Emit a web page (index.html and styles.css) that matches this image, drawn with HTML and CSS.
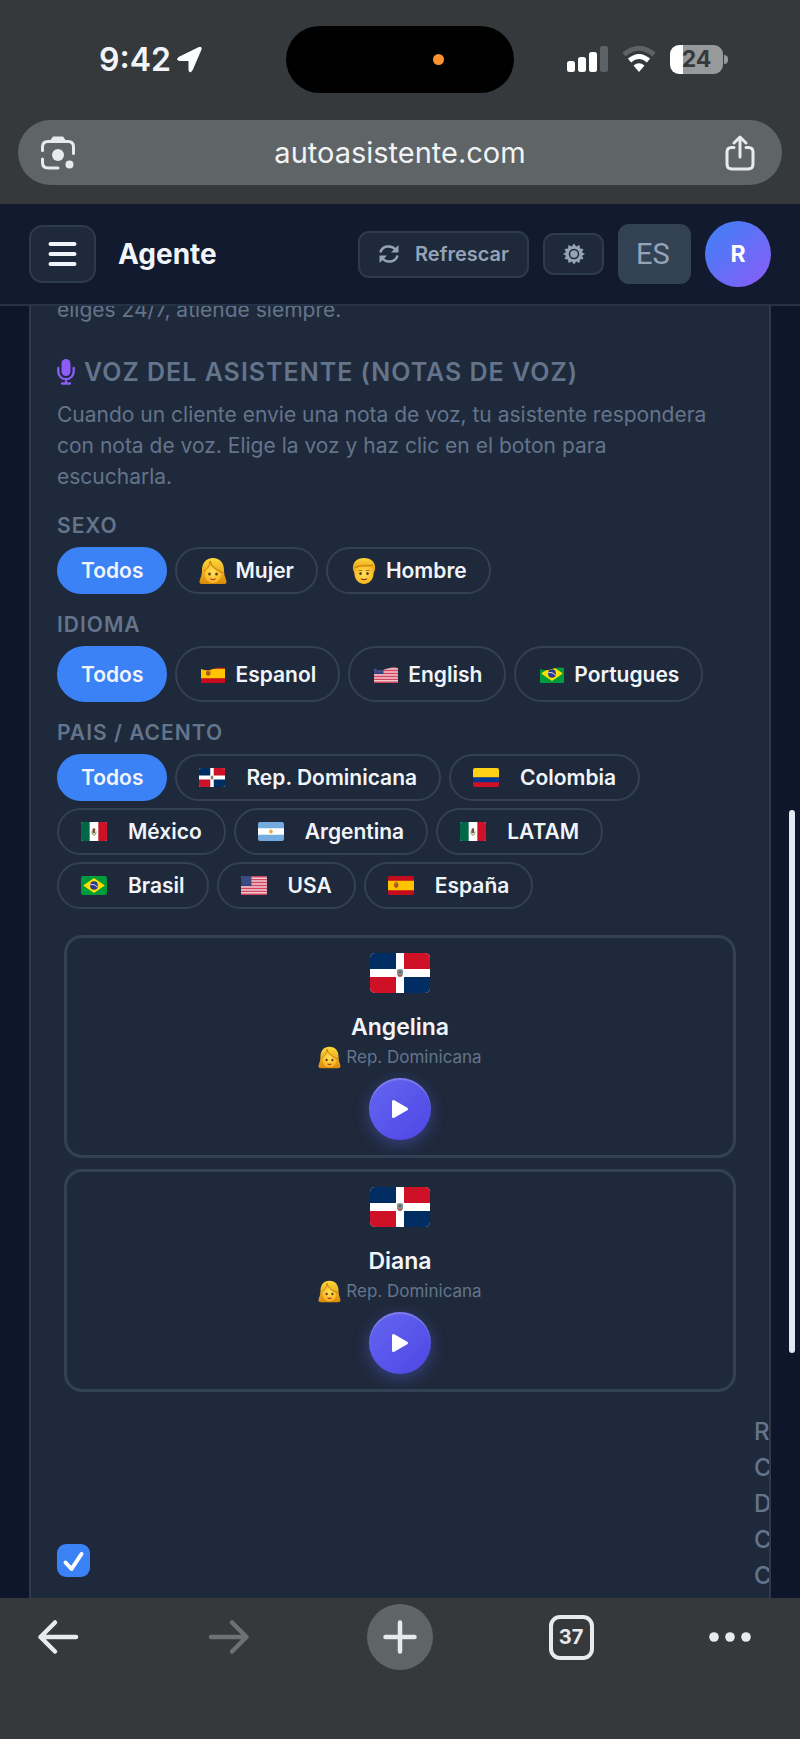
FILE: index.html
```html
<!DOCTYPE html>
<html lang="es">
<head>
  <meta charset="UTF-8">
  <meta name="viewport" content="width=device-width, initial-scale=1.0">
  <title>Agente</title>
  <link rel="stylesheet" href="styles.css">
</head>
<body>
  <!-- Shared icons -->
  <svg class="sprite" width="0" height="0" aria-hidden="true">
    <defs>
      <linearGradient id="hair" x1="0" y1="0" x2="0" y2="1">
        <stop offset="0" stop-color="#ffd83a"/>
        <stop offset="1" stop-color="#d98a0b"/>
      </linearGradient>
      <radialGradient id="skin" cx=".5" cy=".4" r=".6">
        <stop offset="0" stop-color="#ffe25a"/>
        <stop offset="1" stop-color="#fbb41c"/>
      </radialGradient>
      <symbol id="woman" viewBox="0 0 28 28">
        <path d="M14 1C7 1 3 6 3 13c0 6-2 8-2.500 12q0 2 3 2h21q3 0 3-2C27 21 25 19 25 13 25 6 21 1 14 1z" fill="url(#hair)"/>
        <path d="M12 7c-3 3-6 4-6.500 9C5.500 22 9.500 26 14 26s8.500-4 8.500-9.500C20 14 15 12 12 7z" fill="url(#skin)"/>
        <path d="M11 4c1 6 7 9 13 12" fill="none" stroke="#c97a08" stroke-width="1.200"/>
        <path d="M11 4c0 5-3 8-6 10" fill="none" stroke="#c97a08" stroke-width="1"/>
        <ellipse cx="10.500" cy="17" rx="1.300" ry="1.600" fill="#5b3a12"/>
        <ellipse cx="17.500" cy="17" rx="1.300" ry="1.600" fill="#5b3a12"/>
        <path d="M12 22q2 1.300 4 0" fill="#c4303a" stroke="#c4303a" stroke-width="1.400" stroke-linecap="round"/>
      </symbol>
      <symbol id="man" viewBox="0 0 28 28">
        <path d="M3 13C2 5 7 1 14 1s12 4 11 12l-2 4H5z" fill="url(#hair)"/>
        <path d="M4.500 11c3-2 16-2 19 0v6c0 6-5 10-9.500 10S4.500 23 4.500 17z" fill="url(#skin)"/>
        <path d="M5 11c4-4 13-1 18-3" fill="none" stroke="#c97a08" stroke-width="1.200"/>
        <path d="M9 13.500h3M16 13.500h3" stroke="#b5730d" stroke-width="1.200" stroke-linecap="round"/>
        <ellipse cx="10.500" cy="16.500" rx="1.300" ry="1.600" fill="#5b3a12"/>
        <ellipse cx="17.500" cy="16.500" rx="1.300" ry="1.600" fill="#5b3a12"/>
        <path d="M11.500 22q2.500 1.300 5 0" fill="none" stroke="#8b3a12" stroke-width="1.400" stroke-linecap="round"/>
      </symbol>
      <symbol id="do" viewBox="0 0 60 40" preserveAspectRatio="none">
        <path fill="#fff" d="M0 0h60v40H0z"/>
        <path fill="#002d62" d="M0 0h26v16H0zM34 24h26v16H34z"/>
        <path fill="#ce1126" d="M34 0h26v16H34zM0 24h26v16H0z"/>
        <path fill="#8a8f86" d="M27 17q3-2 6 0v5l-3 2-3-2z"/>
        <path fill="#b04a4a" d="M28 22h4v1.500h-4z"/>
        <path fill="#35618a" d="M29 18h2v2h-2z"/>
      </symbol>
      <symbol id="co" viewBox="0 0 60 40" preserveAspectRatio="none">
        <path fill="#fcd116" d="M0 0h60v20H0z"/>
        <path fill="#003893" d="M0 20h60v10H0z"/>
        <path fill="#ce1126" d="M0 30h60v10H0z"/>
      </symbol>
      <symbol id="mx" viewBox="0 0 60 40" preserveAspectRatio="none">
        <path fill="#fff" d="M0 0h60v40H0z"/>
        <path fill="#006847" d="M0 0h20v40H0z"/>
        <path fill="#ce1126" d="M40 0h20v40H40z"/>
        <path fill="none" stroke="#7b8a4a" stroke-width="2" d="M25 20q1 8 5 8t5-8"/>
        <path fill="#7a5230" d="M27 15q4-5 6 1l-1 7-4 1-2-4z"/>
      </symbol>
      <symbol id="ar" viewBox="0 0 60 40" preserveAspectRatio="none">
        <path fill="#74acdf" d="M0 0h60v40H0z"/>
        <path fill="#fff" d="M0 13h60v14H0z"/>
        <circle cx="30" cy="20" r="4" fill="#e8a838"/>
      </symbol>
      <symbol id="br" viewBox="0 0 60 40" preserveAspectRatio="none">
        <path fill="#009b3a" d="M0 0h60v40H0z"/>
        <path fill="#fedf00" d="M30 4l25 16-25 16L5 20z"/>
        <circle cx="30" cy="20" r="9" fill="#2b3a8c"/>
        <path fill="none" stroke="#dfe6f5" stroke-width="2" d="M21.500 18q9-2 16.500 5"/>
      </symbol>
      <symbol id="us" viewBox="0 0 60 40" preserveAspectRatio="none">
        <path fill="#f3c9d2" d="M0 0h60v40H0z"/>
        <path stroke="#d0465f" stroke-width="3" d="M0 1.500h60M0 7.700h60M0 13.800h60M0 20h60M0 26.200h60M0 32.300h60M0 38.500h60"/>
        <path fill="#34457c" d="M0 0h24v21H0z"/>
        <path stroke="#7684b3" stroke-width="1.500" stroke-dasharray="1.500 3" d="M3 4h20M5 8h18M3 12h20M5 16h18"/>
      </symbol>
      <symbol id="es" viewBox="0 0 60 40" preserveAspectRatio="none">
        <path fill="#c60b1e" d="M0 0h60v40H0z"/>
        <path fill="#ffc400" d="M0 10h60v20H0z"/>
        <path fill="#ad5a1e" d="M14 15h10v7q-5 6-10 0z"/>
        <path fill="#ad5a1e" d="M16 12h6v2h-6z"/>
      </symbol>
      <clipPath id="wave">
        <path d="M1 5q6 2.500 12 0t12-1v16q-6-1.500-12 .500T1 21z"/>
      </clipPath>
    </defs>
  </svg>

  <div class="status">
    <div class="status-time">
      <span>9:42</span>
      <svg width="27" height="27" viewBox="0 0 27 27"><path d="M2.500 11.500 23 1.500q3-1 2 2L16 24.500q-2.500 3-3-.500V14.500H3.500q-3.500-.500-1-3z" fill="#fff" stroke="#fff"/></svg>
    </div>
    <div class="island"><span class="rec-dot"></span></div>
    <div class="status-icons">
      <svg width="41" height="28" viewBox="0 0 41 28">
        <rect x="0" y="16" width="8" height="11" rx="2.500" fill="#fff"/>
        <rect x="11" y="12" width="8" height="15" rx="2.500" fill="#fff"/>
        <rect x="22" y="7" width="8" height="20" rx="2.500" fill="#fff"/>
        <rect x="33" y="1" width="8" height="26" rx="2.500" fill="#5f6264"/>
      </svg>
      <svg width="36" height="28" viewBox="0 0 36 28">
        <path d="M3 9.500Q18-3 33 9.500" fill="none" stroke="#5f6264" stroke-width="5"/>
        <path d="M8.500 15.500Q18 7.500 27.500 15.500" fill="none" stroke="#fff" stroke-width="5"/>
        <path d="M12.500 20.500q5.500-4.500 11 0L18 27z" fill="#fff"/>
      </svg>
      <div class="battery"><span>24</span></div>
    </div>
  </div>

  <form class="url-bar">
    <svg width="36" height="36" viewBox="0 0 36 36" fill="none" stroke="#e8eaed" stroke-width="3" stroke-linecap="round">
      <path d="M2.500 15.500V12q0-5.500 5.500-5.500h20q5.500 0 5.500 5.500v6.500"/>
      <path d="M2.500 24v3.500Q2.500 33 8 33h10"/>
      <path d="M11 6l2.500-3.500h9L25 6z" fill="#e8eaed" stroke-width="2"/>
      <circle cx="18" cy="20" r="6" fill="#e8eaed" stroke="none"/>
      <circle cx="29.500" cy="29.500" r="4" fill="#e8eaed" stroke="none"/>
    </svg>
    <input type="text" value="autoasistente.com" aria-label="Dirección">
    <button type="button" class="icon-btn" aria-label="Compartir">
      <svg width="32" height="36" viewBox="0 0 32 36" fill="none" stroke="#e8eaed" stroke-width="3" stroke-linecap="round" stroke-linejoin="round">
        <path d="M10 12.500H7.500Q3 12.500 3 17v12q0 5 5 5h16q5 0 5-5V17q0-4.500-4.500-4.500H22"/>
        <path d="M16 22V2.500M10 8l6-6 6 6"/>
      </svg>
    </button>
  </form>

  <header class="topbar">
    <button type="button" class="menu-btn" aria-label="Menú">
      <svg width="30" height="28" viewBox="0 0 30 28" stroke="#f1f5f9" stroke-width="4" stroke-linecap="round"><path d="M2.500 4h24M2.500 14h24M2.500 24h24"/></svg>
    </button>
    <h1>Agente</h1>
    <button type="button" class="refresh-btn">
      <svg width="22" height="20" viewBox="0 0 22 20" fill="none" stroke="#94a3b8" stroke-width="2.500">
        <path d="M2.500 8.500C4 2 13 0 18 6M19.500 11.500C18 18 9 20 4 14"/>
        <path d="M20.500 1v7.500H13zM1.500 19v-7.500H9z" fill="#94a3b8" stroke="none"/>
      </svg>
      Refrescar
    </button>
    <button type="button" class="theme-btn" aria-label="Cambiar tema">
      <svg width="22" height="22" viewBox="0 0 22 22">
        <path d="M11 .500l2.200 3L16.500 2l.500 3.500 3.500.500-1.500 3.300 3 1.700-3 1.700L20.500 16l-3.500.500-.500 3.500-3.300-1.500-2.200 3-2.200-3L5.500 20 5 16.500 1.500 16 3 12.700 0 11l3-1.700L1.500 6 5 5.500 5.500 2l3.300 1.500z" fill="#94a3b8"/>
        <circle cx="11" cy="11" r="4.500" fill="#94a3b8" stroke="#1e293b" stroke-width="1.500"/>
      </svg>
    </button>
    <select class="lang" aria-label="Idioma de la interfaz">
      <option>ES</option>
    </select>
    <div class="avatar">R</div>
  </header>

  <main>
    <section class="panel">
      <p class="hint">eliges 24/7, atiende siempre.</p>

      <h2>
        <svg width="18" height="26" viewBox="0 0 18 26">
          <rect x="4.500" y="0" width="9" height="17" rx="4.500" fill="#8b5cf6"/>
          <path d="M1.300 9v3.500a7.700 7.700 0 0 0 15.400 0V9M9 20v4M5 24.500h8" fill="none" stroke="#8b5cf6" stroke-width="2.300" stroke-linecap="round"/>
        </svg>
        VOZ DEL ASISTENTE (NOTAS DE VOZ)
      </h2>
      <p class="hint">Cuando un cliente envie una nota de voz, tu asistente respondera con nota de voz. Elige la voz y haz clic en el boton para escucharla.</p>

      <h3>SEXO</h3>
      <div class="pills">
        <button type="button" class="pill active">Todos</button>
        <button type="button" class="pill"><svg class="emoji"><use href="#woman"/></svg>Mujer</button>
        <button type="button" class="pill"><svg class="emoji"><use href="#man"/></svg>Hombre</button>
      </div>

      <h3>IDIOMA</h3>
      <div class="pills tall">
        <button type="button" class="pill active">Todos</button>
        <button type="button" class="pill"><svg class="emoji" viewBox="-1 -1 28 28"><use href="#es" y="3" width="26" height="19" clip-path="url(#wave)"/></svg>Espanol</button>
        <button type="button" class="pill"><svg class="emoji" viewBox="-1 -1 28 28"><use href="#us" y="3" width="26" height="19" clip-path="url(#wave)"/></svg>English</button>
        <button type="button" class="pill"><svg class="emoji" viewBox="-1 -1 28 28"><use href="#br" y="3" width="26" height="19" clip-path="url(#wave)"/></svg>Portugues</button>
      </div>

      <h3>PAIS / ACENTO</h3>
      <div class="pills countries">
        <button type="button" class="pill active">Todos</button>
        <button type="button" class="pill"><svg class="flag"><use href="#do"/></svg>Rep. Dominicana</button>
        <button type="button" class="pill"><svg class="flag"><use href="#co"/></svg>Colombia</button>
        <button type="button" class="pill"><svg class="flag"><use href="#mx"/></svg>México</button>
        <button type="button" class="pill"><svg class="flag"><use href="#ar"/></svg>Argentina</button>
        <button type="button" class="pill"><svg class="flag"><use href="#mx"/></svg>LATAM</button>
        <button type="button" class="pill"><svg class="flag"><use href="#br"/></svg>Brasil</button>
        <button type="button" class="pill"><svg class="flag"><use href="#us"/></svg>USA</button>
        <button type="button" class="pill"><svg class="flag"><use href="#es"/></svg>España</button>
      </div>

      <div class="voices">
        <article class="voice">
          <svg class="voice-flag"><use href="#do"/></svg>
          <h4>Angelina</h4>
          <p><svg class="emoji-sm"><use href="#woman"/></svg>Rep. Dominicana</p>
          <button type="button" class="play" aria-label="Escuchar a Angelina">
            <svg width="18" height="20" viewBox="0 0 18 20"><path d="M2.500 2.500v15L15.500 10z" fill="#fff" stroke="#fff" stroke-width="3" stroke-linejoin="round"/></svg>
          </button>
        </article>
        <article class="voice">
          <svg class="voice-flag"><use href="#do"/></svg>
          <h4>Diana</h4>
          <p><svg class="emoji-sm"><use href="#woman"/></svg>Rep. Dominicana</p>
          <button type="button" class="play" aria-label="Escuchar a Diana">
            <svg width="18" height="20" viewBox="0 0 18 20"><path d="M2.500 2.500v15L15.500 10z" fill="#fff" stroke="#fff" stroke-width="3" stroke-linejoin="round"/></svg>
          </button>
        </article>
      </div>

      <div class="option">
        <input type="checkbox" id="option" checked>
        <label for="option">R C D C C</label>
      </div>
    </section>
    <div class="scrollbar"></div>
  </main>

  <nav class="toolbar">
    <button type="button" aria-label="Atrás">
      <svg width="42" height="36" viewBox="0 0 42 36" fill="none" stroke="#e8eaed" stroke-width="4.500" stroke-linecap="round" stroke-linejoin="round"><path d="M39 18H3.500M18 3.500 3.500 18 18 32.500"/></svg>
    </button>
    <button type="button" aria-label="Adelante">
      <svg width="42" height="36" viewBox="0 0 42 36" fill="none" stroke="#6d7173" stroke-width="4.500" stroke-linecap="round" stroke-linejoin="round"><path d="M3 18h35.500M24 3.500 38.500 18 24 32.500"/></svg>
    </button>
    <button type="button" class="new-tab" aria-label="Nueva pestaña">
      <svg width="34" height="34" viewBox="0 0 34 34" stroke="#e8eaed" stroke-width="4.500" stroke-linecap="round"><path d="M17 2.500v29M2.500 17h29"/></svg>
    </button>
    <button type="button" aria-label="Pestañas abiertas"><span class="tab-count">37</span></button>
    <button type="button" class="more" aria-label="Más">
      <svg width="42" height="10" viewBox="0 0 42 10" fill="#e8eaed"><circle cx="5" cy="5" r="4.800"/><circle cx="21" cy="5" r="4.800"/><circle cx="37" cy="5" r="4.800"/></svg>
    </button>
  </nav>
</body>
</html>
```

FILE: styles.css
```css
* {
  box-sizing: border-box;
}
body {
  margin: 0;
  height: 100vh;
  display: flex;
  flex-direction: column;
  background: #35393b;
  color: #f1f5f9;
  font-family: Inter, "Liberation Sans", sans-serif;
}
button {
  font-family: inherit;
  cursor: pointer;
}
h1, h2, h3, h4, p {
  margin: 0;
}
svg {
  flex-shrink: 0;
}
.sprite {
  position: absolute;
}

/* Phone status bar */
.status {
  height: 118px;
  flex-shrink: 0;
  display: grid;
  grid-template-columns: 1fr 228px 1fr;
  align-items: center;
}
.status-time {
  display: flex;
  align-items: center;
  gap: 5px;
  padding-left: 99px;
  font-size: 32px;
  font-weight: 600;
}
.island {
  height: 67px;
  border-radius: 34px;
  background: #000;
  display: flex;
  align-items: center;
  justify-content: flex-end;
  padding-right: 70px;
}
.rec-dot {
  width: 11px;
  height: 11px;
  border-radius: 50%;
  background: #ff9230;
}
.status-icons {
  display: flex;
  align-items: center;
  gap: 13px;
  padding-left: 53px;
}
.battery {
  position: relative;
  width: 53px;
  height: 29px;
  border-radius: 9px;
  background: linear-gradient(90deg, #fff 13px, #97999a 13px);
  color: #35393b;
  font-size: 23px;
  font-weight: 700;
  line-height: 29px;
  text-align: center;
}
.battery::after {
  content: "";
  position: absolute;
  right: -5px;
  top: 10px;
  width: 4px;
  height: 9px;
  border-radius: 0 4px 4px 0;
  background: #97999a;
}

.url-bar {
  height: 65px;
  flex-shrink: 0;
  margin: 2px 18px 19px;
  padding: 0 26px 0 22px;
  border-radius: 33px;
  background: #5f6467;
  display: flex;
  align-items: center;
}
.url-bar input {
  flex: 1;
  min-width: 0;
  border: 0;
  background: none;
  color: #f1f3f4;
  font-family: inherit;
  font-size: 29px;
  text-align: center;
}
.icon-btn {
  display: flex;
  padding: 0;
  border: 0;
  background: none;
}

/* App header */
.topbar {
  height: 102px;
  flex-shrink: 0;
  display: flex;
  align-items: center;
  gap: 14px;
  padding: 0 29px;
  background: #111a2e;
  border-bottom: 2px solid #263246;
}
.menu-btn, .refresh-btn, .theme-btn {
  display: flex;
  align-items: center;
  justify-content: center;
  padding: 0;
  border: 2px solid #2d3b4f;
  background: #1e293b;
}
.menu-btn {
  width: 67px;
  height: 58px;
  border-radius: 14px;
}
h1 {
  margin: 0 auto 0 8px;
  font-size: 28px;
  font-weight: 700;
}
.refresh-btn {
  height: 47px;
  gap: 15px;
  padding: 0 18px;
  border-radius: 11px;
  color: #94a3b8;
  font-size: 20px;
  font-weight: 600;
}
.theme-btn {
  width: 61px;
  height: 42px;
  border-radius: 11px;
}
.lang {
  appearance: none;
  width: 73px;
  height: 60px;
  padding: 0 18px;
  border: 0;
  border-radius: 11px;
  background: #334155;
  color: #94a3b8;
  font-family: Roboto, sans-serif;
  font-size: 29px;
}
.avatar {
  width: 66px;
  height: 66px;
  border-radius: 50%;
  background: linear-gradient(135deg, #3b82f6, #8b5cf6);
  color: #fff;
  font-size: 23px;
  font-weight: 700;
  line-height: 66px;
  text-align: center;
}

main {
  position: relative;
  flex: 1;
  min-height: 0;
  overflow: hidden;
  background: #0d162a;
}
.panel {
  min-height: 110%;
  margin: -12px 29px 0;
  padding: 0 26px;
  background: #1e293b;
  border: solid #2d3a4e;
  border-width: 0 2px;
}
.hint {
  padding-right: 20px;
  color: #64748b;
  font-size: 21px;
  line-height: 31px;
}
h2 {
  display: flex;
  align-items: center;
  gap: 9px;
  margin: 29px 0 9px;
  color: #64748b;
  font-size: 25px;
  font-weight: 600;
  line-height: 36px;
  letter-spacing: 1px;
}
h3 {
  margin: 15px 0 6px;
  color: #64748b;
  font-size: 21px;
  font-weight: 600;
  line-height: 31px;
  letter-spacing: 1px;
}
.hint + h3 {
  margin-top: 18px;
}

/* Filters */
.pills {
  display: flex;
  flex-wrap: wrap;
  gap: 7px 8px;
}
.pill {
  display: flex;
  align-items: center;
  gap: 8px;
  height: 47px;
  padding: 0 22px;
  border: 2px solid #334155;
  border-radius: 28px;
  background: #1e293b;
  color: #f1f5f9;
  font-size: 21px;
  font-weight: 600;
}
.pill.active {
  background: #3b82f6;
  border-color: #3b82f6;
}
.tall .pill {
  height: 56px;
}
.countries .pill {
  gap: 21px;
}
.emoji {
  width: 28px;
  height: 28px;
}
.flag {
  width: 26px;
  height: 19px;
  border-radius: 2px;
}

/* Voice cards */
.voices {
  display: grid;
  gap: 11px;
  margin-top: 26px;
  padding: 0 7px;
}
.voice {
  display: flex;
  flex-direction: column;
  align-items: center;
  padding: 15px;
  border: 3px solid #334155;
  border-radius: 18px;
}
.voice-flag {
  width: 60px;
  height: 40px;
  margin-bottom: 19px;
  border-radius: 5px;
}
.voice h4 {
  font-size: 23px;
  font-weight: 600;
  line-height: 30px;
}
.voice p {
  display: flex;
  align-items: center;
  gap: 5px;
  color: #64748b;
  font-size: 17px;
  line-height: 30px;
}
.emoji-sm {
  width: 23px;
  height: 23px;
}
.play {
  display: flex;
  align-items: center;
  justify-content: center;
  width: 62px;
  height: 62px;
  margin-top: 6px;
  padding: 0;
  border: 0;
  border-radius: 50%;
  background: linear-gradient(135deg, #6366f1, #4f46e5);
  box-shadow: 0 4px 16px rgba(99, 102, 241, 0.4), inset 0 2px 1px rgba(255, 255, 255, 0.2);
}

.option {
  display: flex;
  align-items: flex-end;
  justify-content: space-between;
  margin: 22px -26px 0 0;
}
.option input {
  appearance: none;
  width: 33px;
  height: 33px;
  margin: 0 0 17px;
  border-radius: 9px;
  background: #3b82f6 url("data:image/svg+xml,%3Csvg xmlns='http://www.w3.org/2000/svg' viewBox='0 0 33 33'%3E%3Cpath d='M8.500 18.500l6 6.500L24.500 10' fill='none' stroke='%23fff' stroke-width='4' stroke-linecap='round' stroke-linejoin='round'/%3E%3C/svg%3E");
}
.option label {
  width: 15px;
  overflow: hidden;
  color: #64748b;
  font-size: 24px;
  font-weight: 500;
  line-height: 36px;
}

.scrollbar {
  position: absolute;
  top: 39%;
  right: 5px;
  width: 6px;
  height: 42%;
  border-radius: 3px;
  background: #e2e8f0;
}

/* Browser toolbar */
.toolbar {
  height: 141px;
  flex-shrink: 0;
  display: flex;
  align-items: flex-start;
  justify-content: space-between;
  padding: 6px 25px 0;
}
.toolbar button {
  display: flex;
  align-items: center;
  justify-content: center;
  width: 66px;
  height: 66px;
  padding: 0;
  border: 0;
  border-radius: 50%;
  background: none;
}
.toolbar .new-tab {
  background: #5f6467;
}
.toolbar .more {
  justify-content: flex-start;
}
.tab-count {
  width: 45px;
  height: 45px;
  border: 4px solid #e8eaed;
  border-radius: 11px;
  color: #e8eaed;
  font-size: 20px;
  font-weight: 700;
  line-height: 37px;
}
```
